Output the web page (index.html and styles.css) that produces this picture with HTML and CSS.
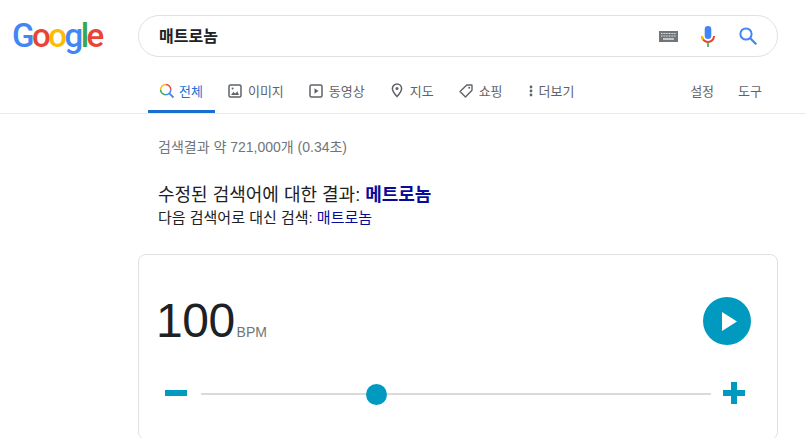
FILE: index.html
```html
<!DOCTYPE html>
<html lang="ko">
<head>
<meta charset="utf-8">
<title>매트로놈 - Google 검색</title>
<link rel="stylesheet" href="styles.css">
</head>
<body>
<header class="top">
  <div class="logo" aria-label="Google"><span class="blue">G</span><span class="red">o</span><span class="yellow">o</span><span class="blue">g</span><span class="green">l</span><span class="red">e</span></div>
  <div class="searchbox">
    <div class="query">매트로놈</div>
    <svg class="kbd" width="19" height="11" viewBox="0 0 19 11"><rect width="19" height="11" fill="#70757a"/><path d="M2 2.500h15M2 5h15" stroke="#e8e8e8" stroke-width="1.200" stroke-dasharray="1 .6"/><path d="M4 8h11" stroke="#e8e8e8" stroke-width="1.400"/></svg>
    <svg class="mic" width="14" height="21" viewBox="0 0 14 21"><rect x="3.700" y="0" width="6.600" height="13" rx="3.300" fill="#4285f4"/><path d="M1 10a6 6 0 0 0 12 0" fill="none" stroke="#ea4335" stroke-width="2"/><path d="M1 10a6 6 0 0 0 1.200 3.600" fill="none" stroke="#fbbc05" stroke-width="2"/><rect x="6.200" y="16.500" width="1.600" height="4.500" fill="#34a853"/></svg>
    <svg class="mag" width="18" height="18" viewBox="0 0 18 18"><circle cx="7" cy="7" r="5.600" fill="none" stroke="#4285f4" stroke-width="2"/><path d="M11 11l6.300 6.300" stroke="#4285f4" stroke-width="2.200"/></svg>
  </div>
</header>
<nav class="tabs">
  <a class="tab active">
    <svg width="16" height="16" viewBox="0 0 16 16"><path d="M10.300 10.300l4.200 4.200" stroke="#4285f4" stroke-width="1.800"/><path d="M6.700 1.600a5.100 5.100 0 0 1 5.100 5.100" fill="none" stroke="#ea4335" stroke-width="1.500"/><path d="M1.600 6.700a5.100 5.100 0 0 1 5.100-5.100" fill="none" stroke="#fbbc05" stroke-width="1.500"/><path d="M6.700 11.800a5.100 5.100 0 0 1-5.100-5.100" fill="none" stroke="#34a853" stroke-width="1.500"/><path d="M11.800 6.700a5.100 5.100 0 0 1-5.100 5.100" fill="none" stroke="#4285f4" stroke-width="1.500"/></svg>
    전체
  </a>
  <a class="tab">
    <svg width="14" height="14" viewBox="0 0 14 14"><rect x="1" y="1" width="12" height="12" rx="1.500" fill="none" stroke="#5f6368" stroke-width="1.500"/><path d="M3 11l2.500-3.200 1.700 2 2-2.600L11 11z" fill="#5f6368"/><circle cx="4.600" cy="4.600" r="1" fill="#5f6368"/></svg>
    이미지
  </a>
  <a class="tab">
    <svg width="14" height="14" viewBox="0 0 14 14"><rect x="1" y="1" width="12" height="12" rx="1.500" fill="none" stroke="#5f6368" stroke-width="1.500"/><path d="M5.500 4.200l4 2.800-4 2.800z" fill="#5f6368"/></svg>
    동영상
  </a>
  <a class="tab">
    <svg width="14" height="15" viewBox="0 0 14 15"><path d="M7 1a4.600 4.600 0 0 0-4.600 4.600C2.400 8.800 7 13.600 7 13.600s4.600-4.800 4.600-8A4.600 4.600 0 0 0 7 1z" fill="none" stroke="#5f6368" stroke-width="1.500"/><circle cx="7" cy="5.600" r="1.500" fill="#5f6368"/></svg>
    지도
  </a>
  <a class="tab">
    <svg width="14" height="14" viewBox="0 0 14 14"><path d="M7.800 1H12.500a.5.5 0 0 1 .5.5V6.200L6.500 13 1 7.500z" fill="none" stroke="#5f6368" stroke-width="1.400" stroke-linejoin="round"/><circle cx="10.200" cy="3.800" r="1" fill="#5f6368"/></svg>
    쇼핑
  </a>
  <a class="tab more">
    <svg width="6" height="12" viewBox="0 0 6 12"><circle cx="3" cy="2" r="1.400" fill="#5f6368"/><circle cx="3" cy="6" r="1.400" fill="#5f6368"/><circle cx="3" cy="10" r="1.400" fill="#5f6368"/></svg>
    더보기
  </a>
  <div class="tools">
    <a class="tool">설정</a>
    <a class="tool">도구</a>
  </div>
</nav>
<main class="results">
  <p class="stats">검색결과 약 721,000개 (0.34초)</p>
  <p class="corrected">수정된 검색어에 대한 결과: <a class="fix">메트로놈</a></p>
  <p class="instead">다음 검색어로 대신 검색: <a class="orig">매트로놈</a></p>
  <section class="card">
    <div class="readout">
      <div class="tempo"><span class="num">100</span><span class="unit">BPM</span></div>
      <button class="play" aria-label="재생"><svg width="15" height="19" viewBox="0 0 15 19"><path d="M0 0l15 9.500L0 19z" fill="#fff"/></svg></button>
    </div>
    <div class="slider">
      <span class="minus"></span>
      <div class="track"><span class="thumb" style="left:34.3%"></span></div>
      <span class="plus"></span>
    </div>
  </section>
</main>
</body>
</html>
```

FILE: styles.css
```css
* { box-sizing: border-box; }
html, body { height: 100%; }
body {
  margin: 0;
  background: #fff;
  overflow: hidden;
  font-family: "Liberation Sans", "Noto Sans CJK KR", sans-serif;
  color: #202124;
}
p { margin: 0; }

.top {
  display: flex;
  align-items: center;
  height: 42px;
  margin-top: 15px;
  padding-left: 12px;
}
.logo {
  width: 126px;
  font-family: Roboto, sans-serif;
  font-size: 33px;
  font-weight: 500;
  letter-spacing: -2.500px;
  line-height: 42px;
}
.blue { color: #4285f4; }
.red { color: #ea4335; }
.yellow { color: #fbbc05; }
.green { color: #34a853; }

.searchbox {
  display: flex;
  align-items: center;
  width: 640px;
  height: 42px;
  border: 1px solid #dfe1e5;
  border-radius: 21px;
  padding: 0 20px 0 20px;
}
.query {
  flex: 1;
  padding-bottom: 3px;
  font-size: 16px;
  font-weight: 700;
  color: #202124;
}
.kbd { margin-right: 23px; }
.mic { margin-right: 24px; }

.tabs {
  display: flex;
  align-items: flex-start;
  height: 57px;
  padding-left: 148px;
  border-bottom: 1px solid #ebebeb;
}
.tab {
  display: flex;
  align-items: center;
  gap: 6px;
  height: 56px;
  padding: 11px 12px 0 13px;
  font-size: 13px;
  color: #5f6368;
  white-space: nowrap;
}
.tab.active {
  color: #1a73d8;
  border-bottom: 3px solid #1a6fd0;
  padding: 14px 12px 0 11px;
  gap: 4px;
}
.tab.more { gap: 5px; }
.tools {
  display: flex;
  gap: 24px;
  height: 56px;
  margin-left: auto;
  margin-right: 44px;
  align-items: center;
  padding-top: 11px;
}
.tool {
  font-size: 13px;
  color: #5f6368;
}

.results {
  padding-left: 138px;
  width: 778px;
}
.stats {
  margin: 23px 0 0 20px;
  font-size: 14px;
  line-height: 20px;
  color: #70757a;
}
.corrected {
  margin: 26px 0 0 20px;
  font-size: 18px;
  line-height: 24px;
  color: #202124;
}
.fix {
  font-weight: 700;
  color: #0a0a9a;
}
.instead {
  margin-left: 20px;
  font-size: 15px;
  line-height: 22px;
  color: #202124;
}
.orig { color: #0a0a9a; }

.card {
  margin-top: 25px;
  height: 186px;
  border: 1px solid #dfe1e5;
  border-radius: 8px;
  padding: 42px 26px 0 19px;
}
.readout {
  display: flex;
  justify-content: space-between;
  align-items: center;
  height: 48px;
}
.tempo { display: flex; align-items: baseline; }
.num {
  margin-left: -2px;
  font-size: 48px;
  line-height: 48px;
  letter-spacing: -0.500px;
  color: #202124;
}
.unit {
  margin-left: 2px;
  font-size: 14px;
  color: #70757a;
}
.play {
  display: flex;
  align-items: center;
  justify-content: center;
  width: 48px;
  height: 48px;
  border: 0;
  padding: 0 0 0 4px;
  border-radius: 50%;
  background: #0099c0;
}
.slider {
  display: flex;
  align-items: center;
  margin: 37px 0 0 7px;
  height: 22px;
}
.minus {
  width: 22px;
  height: 6px;
  background: #0099c0;
}
.track {
  position: relative;
  width: 510px;
  height: 2px;
  margin: 1px 12px 0 14px;
  background: #dadada;
}
.thumb {
  position: absolute;
  top: -9px;
  width: 21px;
  height: 21px;
  margin-left: -10px;
  border-radius: 50%;
  background: #0099c0;
}
.plus {
  width: 22px;
  height: 22px;
  background:
    linear-gradient(#0099c0, #0099c0) center / 22px 6px no-repeat,
    linear-gradient(#0099c0, #0099c0) center / 6px 22px no-repeat;
}
```
